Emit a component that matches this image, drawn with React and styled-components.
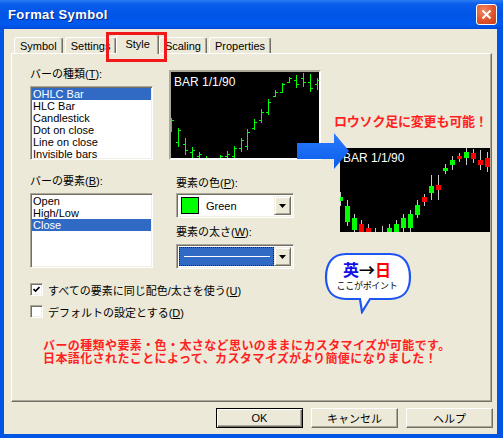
import React from "react"
import styled, { createGlobalStyle, css } from "styled-components"

const GlobalStyle = createGlobalStyle`
  html, body {
    margin: 0;
    padding: 0;
    background: #ece9d8;
  }
  body {
    font-family: "Liberation Sans", "Noto Sans CJK JP", sans-serif;
    font-size: 11px;
    color: #000;
  }
`

const Window = styled.div`
  width: 503px;
  height: 438px;
  display: flex;
  flex-direction: column;
  background: #0055e5;
  overflow: hidden;
`

const TitleBar = styled.div`
  height: 29px;
  flex: none;
  display: flex;
  align-items: center;
  justify-content: space-between;
  padding: 0 6px 0 8px;
  background: linear-gradient(#2a7cf5 0%, #0b5eeb 14%, #0054e6 50%, #0059ee 85%, #004ad8 100%);
`

const Title = styled.span`
  font: bold 13px "Liberation Sans", sans-serif;
  letter-spacing: 0.4px;
  color: #fff;
  text-shadow: 1px 1px #0a2a8a;
`

const CloseButton = styled.div`
  width: 19px;
  height: 19px;
  border: 1px solid #fff;
  border-radius: 3px;
  display: flex;
  align-items: center;
  justify-content: center;
  background: radial-gradient(circle at 35% 30%, #ef8a67 0%, #e0542c 55%, #c43b15 100%);
`

const Frame = styled.div`
  flex: 1;
  display: flex;
  padding: 0 6px 4px 4px;
`

const Body = styled.div`
  flex: 1;
  display: flex;
  flex-direction: column;
  background: #ece9d8;
`

const TabStrip = styled.div`
  position: relative;
  height: 24px;
  margin-left: 7px;
  padding-left: 3px;
  display: flex;
  align-items: flex-end;
  gap: 2px;
`

const Tab = styled.div`
  position: relative;
  box-sizing: border-box;
  height: 16px;
  padding: 0 5px;
  display: flex;
  align-items: center;
  background: #ece9d8;
  border: 1px solid;
  border-bottom: none;
  border-color: #fff #716f64 transparent #fff;
  box-shadow: inset -1px 0 #aca899;
  border-radius: 3px 3px 0 0;
  ${p => p.$active && css`
    height: 20px;
    margin: 0 -2px -1px;
    padding: 0 8px 2px;
    z-index: 1;
  `}
`

const Highlight = styled.div`
  position: absolute;
  left: 95px;
  top: 3px;
  width: 61px;
  height: 30px;
  box-sizing: border-box;
  border: 3px solid #f01818;
  z-index: 2;
`

const Panel = styled.div`
  position: relative;
  box-sizing: border-box;
  height: 349px;
  margin: 0 5px 0 7px;
  padding: 14px 0 0 18px;
  border: 1px solid;
  border-color: #fff #716f64 #716f64 #fff;
  box-shadow: inset -1px -1px #aca899;
`

const Grid = styled.div`
  display: grid;
  grid-template-columns: 123px 152px;
  column-gap: 16px;
  row-gap: 15px;
`

const Field = styled.div`
  display: flex;
  flex-direction: column;
  padding-left: ${p => p.$indent || 0}px;
  padding-top: ${p => p.$top || 0}px;
`

const Label = styled.div`
  height: 12px;
  line-height: 12px;
  white-space: nowrap;
  margin-bottom: ${p => p.$gap ?? 6}px;
`

const sunken = css`
  box-sizing: border-box;
  border: 1px solid;
  border-color: #aca899 #fff #fff #aca899;
  box-shadow: inset 1px 1px #716f64, inset -1px -1px #f1efe2;
`

const ListBox = styled.div`
  ${sunken}
  height: ${p => p.$h}px;
  background: #fff;
  padding: 1px;
`

const ListItem = styled.div`
  height: 12px;
  line-height: 12px;
  padding-left: 1px;
  white-space: nowrap;
  background: ${p => (p.$selected ? "#316ac5" : "transparent")};
  color: ${p => (p.$selected ? "#fff" : "#000")};
`

const ChartBox = styled.div`
  box-sizing: border-box;
  width: ${p => p.$w}px;
  height: ${p => p.$h}px;
  background: #000;
  overflow: hidden;
  ${p => p.$sunken && css`
    border: 2px solid;
    border-color: #aca899 #fff #fff #aca899;
    margin-top: 2px;
  `}
  svg {
    display: block;
  }
`

const Combo = styled.div`
  ${sunken}
  width: 118px;
  height: 25px;
  margin-bottom: ${p => p.$gap || 0}px;
  background: #fff;
  display: flex;
  padding: 2px;
`

const ComboValue = styled.div`
  flex: 1;
  display: flex;
  align-items: center;
  gap: 7px;
  padding-left: 2px;
  ${p => p.$focused && css`
    background: #316ac5;
    outline: 1px dotted #202020;
    outline-offset: -1px;
    padding: 0 4px 0 5px;
  `}
`

const Swatch = styled.div`
  width: 16px;
  height: 15px;
  border: 1px solid #000;
  background: ${p => p.$color};
`

const WidthLine = styled.div`
  flex: 1;
  height: 1px;
  background: #fff;
`

const DropButton = styled.div`
  width: 17px;
  flex: none;
  box-sizing: border-box;
  display: flex;
  align-items: center;
  justify-content: center;
  background: #ece9d8;
  border: 1px solid;
  border-color: #f1efe2 #716f64 #716f64 #f1efe2;
  box-shadow: inset 1px 1px #fff, inset -1px -1px #aca899;
`

const CheckRow = styled.label`
  display: flex;
  align-items: center;
  gap: 5px;
  height: 13px;
  margin-top: ${p => p.$top}px;
  white-space: nowrap;
`

const CheckBox = styled.span`
  ${sunken}
  width: 13px;
  height: 13px;
  background: #fff;
  display: flex;
  align-items: center;
  justify-content: center;
`

const Note = styled.p`
  margin: 20px 0 0 13px;
  font: bold 12px/13px "Noto Sans CJK JP", sans-serif;
  letter-spacing: 0.4px;
  color: #ff1f1f;
`

const Caption = styled.div`
  position: absolute;
  left: 322px;
  top: 59px;
  font: bold 13px/15px "Noto Sans CJK JP", sans-serif;
  letter-spacing: -0.2px;
  color: #ff1f1f;
  white-space: nowrap;
`

const Overlay = styled.div`
  position: absolute;
  left: ${p => p.$x}px;
  top: ${p => p.$y}px;
`

const Bubble = styled.div`
  position: absolute;
  left: 312px;
  top: 198px;
  width: 88px;
  height: 62px;
  svg {
    position: absolute;
    inset: 0;
  }
`

const BubbleText = styled.div`
  position: relative;
  display: flex;
  flex-direction: column;
  align-items: center;
  padding-top: 9px;
  width: 86px;
`

const Headline = styled.div`
  font: bold 16px/16px "Noto Sans CJK JP", sans-serif;
  color: #000;
`

const Word = styled.span`
  color: ${p => p.$color};
`

const Sub = styled.div`
  font: 9px/10px "Noto Sans CJK JP", sans-serif;
  letter-spacing: -0.3px;
  margin-top: 4px;
`

const ButtonRow = styled.div`
  display: flex;
  justify-content: flex-end;
  gap: 8px;
  padding: 6px 4px 0 0;
`

const Button = styled.button`
  width: 87px;
  height: 20px;
  padding: 0;
  box-sizing: border-box;
  font: 11px "Liberation Sans", "Noto Sans CJK JP", sans-serif;
  color: #000;
  background: #ece9d8;
  border: 1px solid;
  border-color: #fff #716f64 #716f64 #fff;
  box-shadow: inset -1px -1px #aca899;
  ${p => p.$default && css`
    border-color: #000;
    box-shadow: inset 1px 1px #fff, inset -1px -1px #716f64, inset -2px -2px #aca899;
  `}
`

const barData = [
  [46, 60, 52, 48], [56, 75, 70, 58], [66, 83, 72, 78], [75, 86, 80, 78],
  [80, 88, 84, 82], [84, 90, 86, 88], [86, 92, 88, 87], [83, 92, 86, 84],
  [79, 90, 84, 82], [74, 88, 84, 76], [66, 80, 76, 68], [57, 78, 74, 60],
  [47, 58, 56, 50], [37, 51, 48, 40], [27, 43, 40, 30], [18, 25, 24, 20],
  [11, 21, 20, 12], [5, 11, 10, 6], [3, 16, 8, 12], [1, 15, 6, 10],
  [2, 20, 10, 16], [6, 18, 12, 8],
]

const candleData = [
  [44, 58, 53, 49], [52, 78, 74, 58], [66, 86, 82, 70], [72, 90, 76, 84],
  [76, 94, 80, 88], [80, 96, 90, 86], [78, 96, 84, 92], [76, 92, 88, 80],
  [72, 90, 86, 76], [66, 84, 80, 70], [62, 84, 80, 66], [52, 70, 67, 57],
  [46, 58, 49, 54], [27, 52, 45, 38], [27, 52, 37, 42], [16, 26, 23, 20],
  [8, 22, 17, 12], [5, 14, 8, 11], [0, 17, 10, 4], [1, 15, 5, 11],
  [2, 22, 12, 17], [4, 24, 10, 19],
]

const ChartLabel = () => (
  <text x="3" y="14" fill="#fff" fontSize="12" fontFamily="Liberation Sans, sans-serif">
    BAR 1/1/90
  </text>
)

const BarChart = () => (
  <ChartBox $w={152} $h={90} $sunken>
    <svg width="148" height="86" shapeRendering="crispEdges">
      <ChartLabel />
      {barData.map(([h, l, o, c], i) => {
        const x = Math.round(i * 6.95)
        return (
          <g key={i} fill="#00ff00">
            <rect x={x} y={h} width="1" height={l - h} />
            <rect x={x - 2} y={o} width="2" height="1" />
            <rect x={x + 1} y={c} width="2" height="1" />
          </g>
        )
      })}
    </svg>
  </ChartBox>
)

const CandleChart = () => (
  <ChartBox $w={150} $h={84}>
    <svg width="150" height="84" shapeRendering="crispEdges">
      <ChartLabel />
      {candleData.map(([h, l, o, c], i) => {
        const x = i * 7
        const up = c < o
        const top = Math.min(o, c)
        return (
          <g key={i}>
            <rect x={x} y={h} width="1" height={l - h} fill="#c8c8c8" />
            <rect x={x - 2} y={top} width="5" height={Math.max(2, Math.abs(o - c))} fill={up ? "#00ff00" : "#ff0000"} />
          </g>
        )
      })}
    </svg>
  </ChartBox>
)

const DownArrow = () => (
  <svg width="7" height="4" viewBox="0 0 7 4">
    <path d="M0 0h7L3.5 4z" fill="#000" />
  </svg>
)

const CheckMark = () => (
  <svg width="7" height="7" viewBox="0 0 7 7">
    <path d="M0.5 3l2 2 4-4" stroke="#000" strokeWidth="1.6" fill="none" />
  </svg>
)

const tabs = ["Symbol", "Settings", "Style", "Scaling", "Properties"]

export default function App() {
  return (
    <>
      <GlobalStyle />
      <Window>
        <TitleBar>
          <Title>Format Symbol</Title>
          <CloseButton>
            <svg width="11" height="11" viewBox="0 0 11 11">
              <path d="M1.5 1.5l8 8M9.5 1.5l-8 8" stroke="#fff" strokeWidth="2" />
            </svg>
          </CloseButton>
        </TitleBar>
        <Frame>
          <Body>
            <TabStrip>
              {tabs.map(t => (
                <Tab key={t} $active={t === "Style"}>{t}</Tab>
              ))}
              <Highlight />
            </TabStrip>
            <Panel>
              <Grid>
                <Field>
                  <Label>バーの種類(<u>T</u>):</Label>
                  <ListBox $h={74}>
                    <ListItem $selected>OHLC Bar</ListItem>
                    <ListItem>HLC Bar</ListItem>
                    <ListItem>Candlestick</ListItem>
                    <ListItem>Dot on close</ListItem>
                    <ListItem>Line on close</ListItem>
                    <ListItem>Invisible bars</ListItem>
                  </ListBox>
                </Field>
                <BarChart />
                <Field>
                  <Label>バーの要素(<u>B</u>):</Label>
                  <ListBox $h={75}>
                    <ListItem>Open</ListItem>
                    <ListItem>High/Low</ListItem>
                    <ListItem $selected>Close</ListItem>
                  </ListBox>
                </Field>
                <Field $indent={7} $top={2}>
                  <Label $gap={4}>要素の色(<u>P</u>):</Label>
                  <Combo $gap={8}>
                    <ComboValue>
                      <Swatch $color="#00ff00" />
                      <span>Green</span>
                    </ComboValue>
                    <DropButton><DownArrow /></DropButton>
                  </Combo>
                  <Label>要素の太さ(<u>W</u>):</Label>
                  <Combo>
                    <ComboValue $focused>
                      <WidthLine />
                    </ComboValue>
                    <DropButton><DownArrow /></DropButton>
                  </Combo>
                </Field>
              </Grid>
              <CheckRow $top={14}>
                <CheckBox><CheckMark /></CheckBox>
                <span>すべての要素に同じ配色/太さを使う(<u>U</u>)</span>
              </CheckRow>
              <CheckRow $top={9}>
                <CheckBox />
                <span>デフォルトの設定とする(<u>D</u>)</span>
              </CheckRow>
              <Note>
                バーの種類や要素・色・太さなど思いのままにカスタマイズが可能です。<br />
                日本語化されたことによって、カスタマイズがより簡便になりました！
              </Note>

              <Caption>ロウソク足に変更も可能！</Caption>
              <Overlay $x={328} $y={94}>
                <CandleChart />
              </Overlay>
              <Overlay $x={285} $y={79}>
                <svg width="53" height="37" viewBox="0 0 53 37">
                  <defs>
                    <linearGradient id="arrowFill" x1="0" y1="0" x2="0" y2="1">
                      <stop offset="0" stopColor="#2a7bff" />
                      <stop offset="1" stopColor="#0a5ce8" />
                    </linearGradient>
                  </defs>
                  <path d="M0 10H37V0L52 18L37 36V26H0Z" fill="url(#arrowFill)" />
                </svg>
              </Overlay>
              <Bubble>
                <svg width="88" height="62" viewBox="0 0 88 62">
                  <path
                    d="M22 2H66C80 2 86 12 86 25C86 38 80 47 66 47H46L38 60L36 47H22C8 47 2 38 2 25C2 12 8 2 22 2Z"
                    fill="#fff"
                    stroke="#1f55f0"
                    strokeWidth="2.2"
                  />
                </svg>
                <BubbleText>
                  <Headline>
                    <Word $color="#1010e8">英</Word>→<Word $color="#ff0000">日</Word>
                  </Headline>
                  <Sub>ここがポイント</Sub>
                </BubbleText>
              </Bubble>
            </Panel>
            <ButtonRow>
              <Button $default>OK</Button>
              <Button>キャンセル</Button>
              <Button>ヘルプ</Button>
            </ButtonRow>
          </Body>
        </Frame>
      </Window>
    </>
  )
}
